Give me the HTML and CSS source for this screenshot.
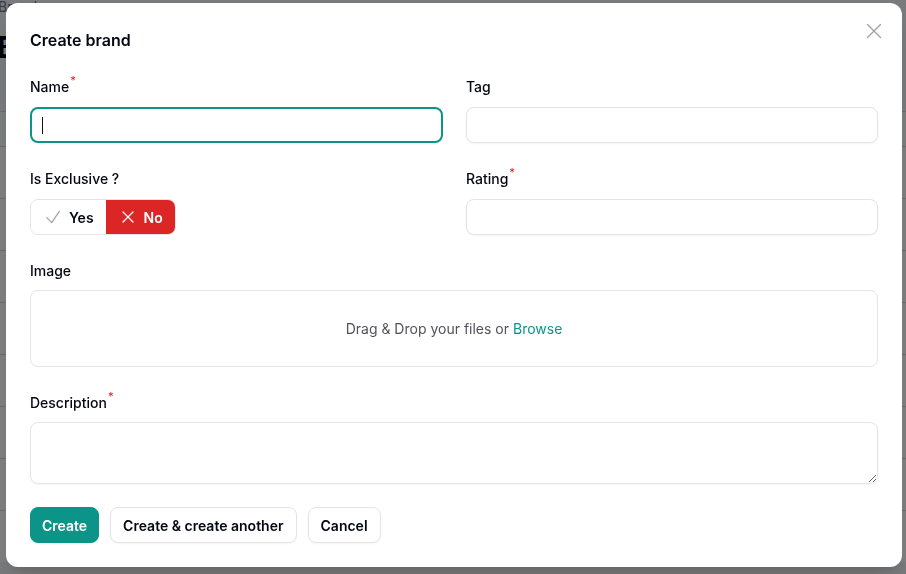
FILE: index.html
```html
<!DOCTYPE html>
<html lang="en">
<head>
<meta charset="utf-8">
<title>Create brand</title>
<link rel="stylesheet" href="styles.css">
</head>
<body>
<div class="page">
  <div class="crumbs">Brands</div>
  <h1 class="page-title">Brands</h1>
  <div class="table">
    <div class="trow head"></div>
    <div class="trow"></div>
    <div class="trow"></div>
    <div class="trow"></div>
    <div class="trow"></div>
    <div class="trow"></div>
    <div class="trow"></div>
    <div class="trow"></div>
    <div class="trow"></div>
  </div>
</div>
<div class="overlay"></div>
<div class="modal">
  <div class="modal-head">
    <h2 class="modal-title">Create brand</h2>
    <button class="close" aria-label="Close">
      <svg viewBox="0 0 16 16" width="16" height="16"><path d="M1.5 1.5l13 13M14.5 1.5l-13 13" stroke="currentColor" stroke-width="1.4" fill="none" stroke-linecap="round"/></svg>
    </button>
  </div>
  <div class="grid">
    <div class="field">
      <label class="label">Name<sup class="req">*</sup></label>
      <div class="input focus"><span class="caret"></span></div>
    </div>
    <div class="field">
      <label class="label">Tag</label>
      <div class="input"></div>
    </div>
    <div class="field">
      <label class="label">Is Exclusive ?</label>
      <div class="toggle">
        <button class="tbtn yes">
          <svg viewBox="0 0 24 24" width="20" height="20"><path d="m4.5 12.75 6 6 9-13.5" stroke="currentColor" stroke-width="1.5" fill="none" stroke-linecap="round" stroke-linejoin="round"/></svg>
          <span>Yes</span>
        </button>
        <button class="tbtn no">
          <svg viewBox="0 0 24 24" width="20" height="20"><path d="M6 18 18 6M6 6l12 12" stroke="currentColor" stroke-width="1.5" fill="none" stroke-linecap="round" stroke-linejoin="round"/></svg>
          <span>No</span>
        </button>
      </div>
    </div>
    <div class="field">
      <label class="label">Rating<sup class="req">*</sup></label>
      <div class="input"></div>
    </div>
    <div class="field span2">
      <label class="label">Image</label>
      <div class="dropzone">Drag &amp; Drop your files or <span class="browse">Browse</span></div>
    </div>
    <div class="field span2">
      <label class="label">Description<sup class="req">*</sup></label>
      <textarea class="textarea" rows="2"></textarea>
    </div>
  </div>
  <div class="actions">
    <button class="btn primary">Create</button>
    <button class="btn">Create &amp; create another</button>
    <button class="btn">Cancel</button>
  </div>
</div>
</body>
</html>
```
FILE: styles.css
```css
* { box-sizing: border-box; }
html, body { margin: 0; padding: 0; }
body {
  font-family: Inter, "Noto Sans", Arial, sans-serif;
  background: #f3f4f6;
  color: #030712;
  width: 906px;
  height: 574px;
  overflow: hidden;
}
.page { margin-left: -2px; }
.crumbs { font-size: 14px; line-height: 20px; color: #6b7280; margin-top: -3px; }
.page-title { font-size: 30px; font-weight: 700; margin: 12px 0 0 -1px; line-height: 36px; color: #030712; }
.table { margin-top: 46px; }
.trow { height: 52px; border-top: 1px solid #d8d9dc; background: #fff; }
.trow.head { height: 35px; background: #f9fafb; }
.overlay {
  position: fixed; inset: 0;
  background: rgba(0, 0, 0, 0.5);
}
.modal {
  position: fixed;
  left: 6px; top: 3px;
  width: 896px;
  height: 564px;
  background: #fff;
  border-radius: 12px;
  padding: 24px;
  box-shadow: 0 20px 25px -5px rgba(0,0,0,0.1), 0 8px 10px -6px rgba(0,0,0,0.1);
}
.modal-head { position: relative; height: 24px; }
.modal-title { margin: 0; font-size: 16px; line-height: 24px; font-weight: 600; color: #030712; padding-top: 1px; }
.close {
  position: absolute; right: -14px; top: -14px;
  width: 36px; height: 36px;
  border: 0; background: none; padding: 0;
  color: #a1a1aa;
  display: flex; align-items: center; justify-content: center;
}
.grid {
  margin-top: 24px;
  display: grid;
  grid-template-columns: 1fr 1fr;
  column-gap: 24px;
  row-gap: 24px;
}
.span2 { grid-column: span 2; }
.field { display: flex; flex-direction: column; gap: 8px; }
.label { font-size: 14px; line-height: 24px; font-weight: 500; color: #030712; }
.req { color: #dc2626; font-weight: 500; font-size: 11px; line-height: 0; vertical-align: top; position: relative; top: 5px; margin-left: 1px; }
.input {
  height: 36px;
  border: 1px solid #e4e4e7;
  border-radius: 8px;
  background: #fff;
  box-shadow: 0 1px 2px rgba(0,0,0,0.04);
  display: flex; align-items: center;
  padding: 0 11px;
}
.input.focus { border: 2px solid #0d9488; padding: 0 10px; margin-right: -1px; }
.caret { display: block; width: 1px; height: 17px; background: #111; }
.toggle {
  display: flex;
  width: max-content;
  height: 36px;
  border: 1px solid #e4e4e7;
  border-radius: 8px;
  overflow: hidden;
}
.tbtn {
  display: flex; align-items: center; gap: 6px;
  border: 0; margin: 0;
  padding: 0 12px;
  font-family: inherit;
  font-size: 14px; font-weight: 600;
  background: #fff; color: #030712;
}
.tbtn.yes svg { color: #a1a1aa; }
.tbtn.no { background: #dc2626; color: #fff; }
.dropzone {
  margin-top: -1px;
  height: 77px;
  border: 1px solid #e4e4e7;
  border-radius: 8px;
  display: flex; align-items: center; justify-content: center;
  font-size: 14px; color: #52525b;
}
.browse { color: #0d9488; margin-left: 4px; }
.textarea {
  display: block;
  width: 100%;
  height: 62px;
  margin-top: -1px;
  border: 1px solid #e4e4e7;
  border-radius: 8px;
  font-family: inherit; font-size: 14px;
  padding: 6px 12px;
  resize: vertical;
  outline: none;
  box-shadow: 0 1px 2px rgba(0,0,0,0.04);
}
.actions { margin-top: 23px; display: flex; gap: 11px; }
.btn {
  height: 36px;
  padding: 0 12px;
  border: 1px solid #e4e4e7;
  border-radius: 8px;
  background: #fff;
  font-family: inherit;
  font-size: 14px; font-weight: 600;
  color: #030712;
  box-shadow: 0 1px 2px rgba(0,0,0,0.04);
}
.btn.primary { background: #0d9488; border-color: #0d9488; color: #fff; padding: 0 11px; }
```
